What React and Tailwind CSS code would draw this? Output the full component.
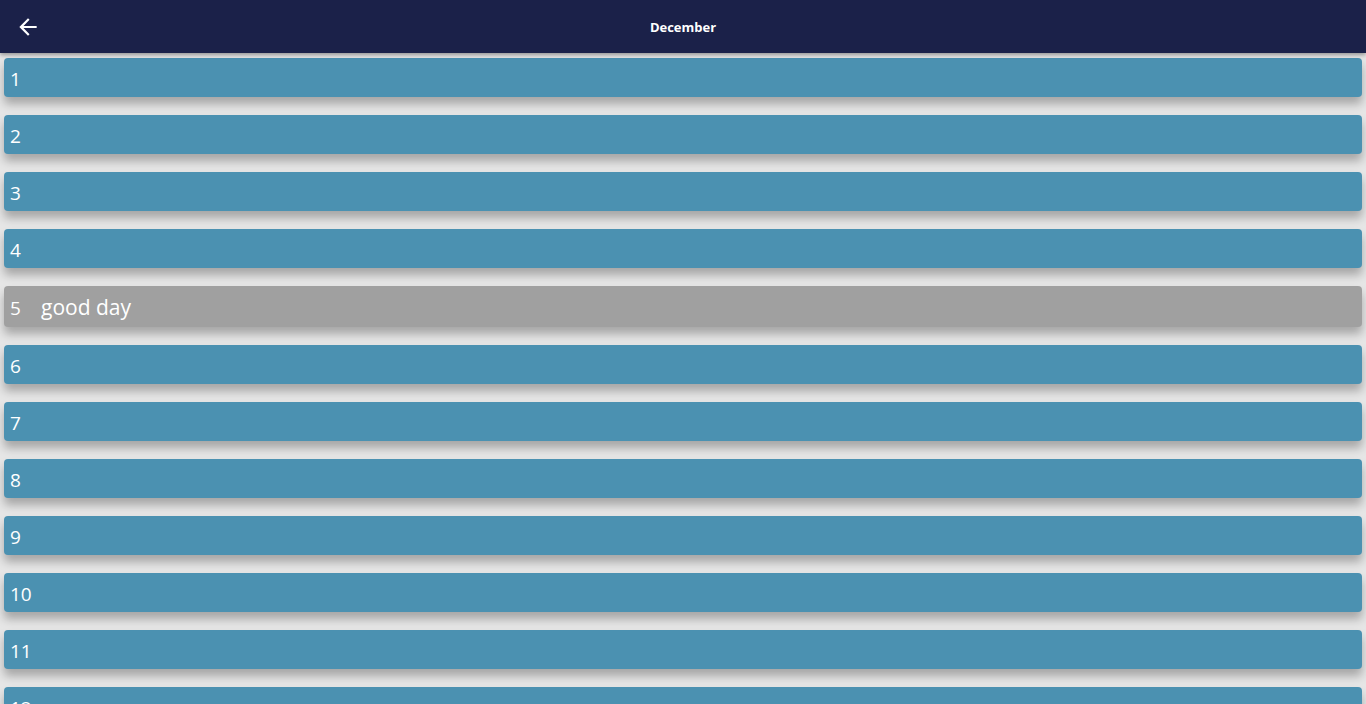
import React from "react";

const days = Array.from({ length: 31 }, (_, i) => i + 1);

function BackArrow() {
  return (
    <svg viewBox="0 0 24 24" className="w-[26px] h-[26px]" fill="#ffffff">
      <path d="M20 11H7.83l5.59-5.59L12 4l-8 8 8 8 1.41-1.41L7.83 13H20v-2z" />
    </svg>
  );
}

export default function App() {
  return (
    <div
      className="h-[704px] overflow-hidden bg-[#e6e6e6]"
      style={{ fontFamily: '"Open Sans", "Noto Sans", sans-serif' }}
    >
      <header className="relative z-10 h-[53px] bg-[#1b2149] flex items-center shadow-[0_2px_4px_rgba(0,0,0,0.35)]">
        <button className="ml-[15px] flex items-center justify-center">
          <BackArrow />
        </button>
        <h1 className="absolute left-1/2 top-[18px] -translate-x-1/2 text-[13px] leading-[18px] font-bold text-white">
          December
        </h1>
      </header>

      <div className="px-[4px] pt-[5px] flex flex-col gap-[18px]">
        {days.map((d) =>
          d === 5 ? (
            <div
              key={d}
              className="h-[41px] rounded-[4px] bg-[#a0a0a0] flex items-center pl-[6px] pt-[3px] text-white shadow-[0_7px_10px_rgba(0,0,0,0.28)]"
            >
              <span className="text-[19px] w-[31px]">{d}</span>
              <span className="text-[21px]">good day</span>
            </div>
          ) : (
            <div
              key={d}
              className="h-[39px] rounded-[4px] bg-[#4b91b1] flex items-center pl-[6px] pt-[3px] text-white shadow-[0_7px_10px_rgba(0,0,0,0.28)]"
            >
              <span className="text-[19px]">{d}</span>
            </div>
          )
        )}
      </div>
    </div>
  );
}
